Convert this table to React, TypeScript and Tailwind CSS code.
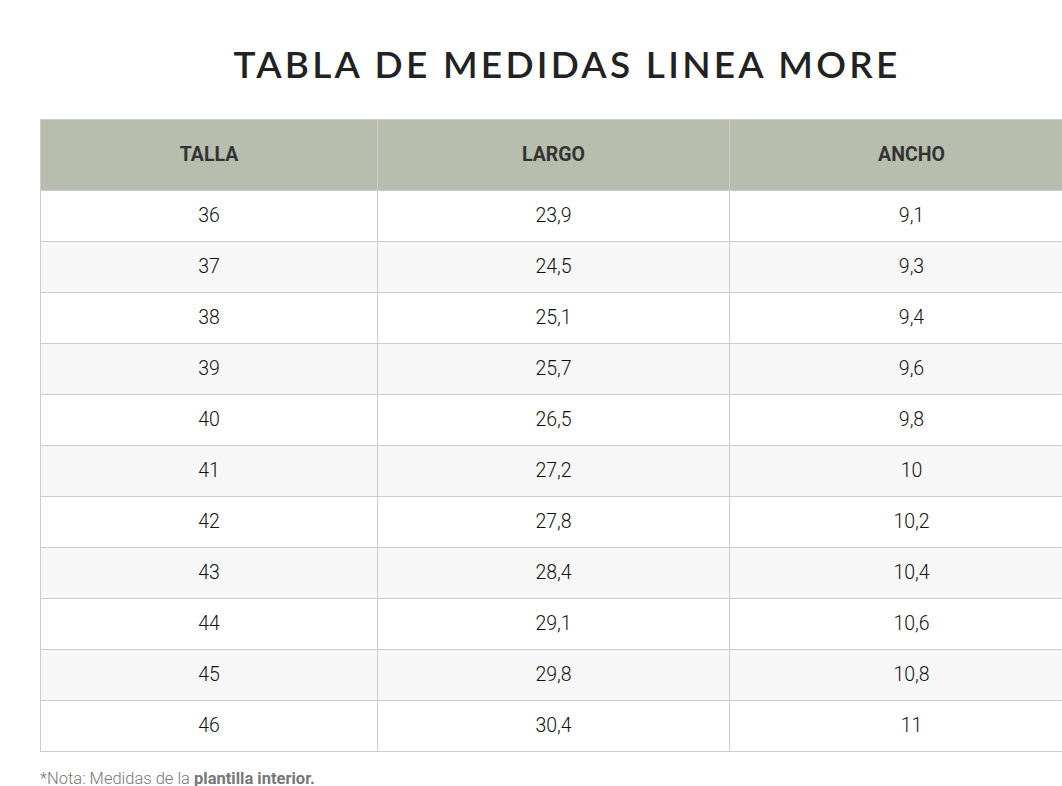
const rows: [string, string, string][] = [
  ["36", "23,9", "9,1"],
  ["37", "24,5", "9,3"],
  ["38", "25,1", "9,4"],
  ["39", "25,7", "9,6"],
  ["40", "26,5", "9,8"],
  ["41", "27,2", "10"],
  ["42", "27,8", "10,2"],
  ["43", "28,4", "10,4"],
  ["44", "29,1", "10,6"],
  ["45", "29,8", "10,8"],
  ["46", "30,4", "11"],
];

const App = () => {
  return (
    <div className="min-h-screen overflow-hidden bg-white">
      <div className="w-[1054px] ml-[40px] pt-[42px]">
        <h1
          className="text-center text-[37px] leading-[44px] font-semibold tracking-[3.25px] text-[#222]"
          style={{ fontFamily: "Lato, 'Noto Sans', sans-serif" }}
        >
          TABLA DE MEDIDAS LINEA MORE
        </h1>

        <table
          className="mt-[33px] w-full border-collapse table-fixed"
          style={{ fontFamily: "Roboto, 'Liberation Sans', sans-serif" }}
        >
          <colgroup>
            <col className="w-[337px]" />
            <col className="w-[352px]" />
            <col />
          </colgroup>
          <thead>
            <tr className="bg-[#b7bead]">
              <th className="border border-[#cccccc] py-[22px] text-[19.5px] leading-[26px] font-bold text-[#333]">TALLA</th>
              <th className="border border-[#cccccc] py-[22px] text-[19.5px] leading-[26px] font-bold text-[#333]">LARGO</th>
              <th className="border border-[#cccccc] py-[22px] text-[19.5px] leading-[26px] font-bold text-[#333]">ANCHO</th>
            </tr>
          </thead>
          <tbody>
            {rows.map((r, i) => (
              <tr key={r[0]} className={i % 2 === 1 ? "bg-[#f7f7f7]" : "bg-white"}>
                {r.map((c, j) => (
                  <td
                    key={j}
                    className="border border-[#cccccc] py-3 text-center text-[19.5px] leading-[26px] font-light text-[#111]"
                  >
                    {c}
                  </td>
                ))}
              </tr>
            ))}
          </tbody>
        </table>

        <p
          className="mt-[15px] text-[16.5px] leading-[24px] font-light text-[#777]"
          style={{ fontFamily: "Roboto, 'Liberation Sans', sans-serif" }}
        >
          *Nota: Medidas de la <strong className="font-bold">plantilla interior.</strong>
        </p>
      </div>
    </div>
  );
};

export default App;
